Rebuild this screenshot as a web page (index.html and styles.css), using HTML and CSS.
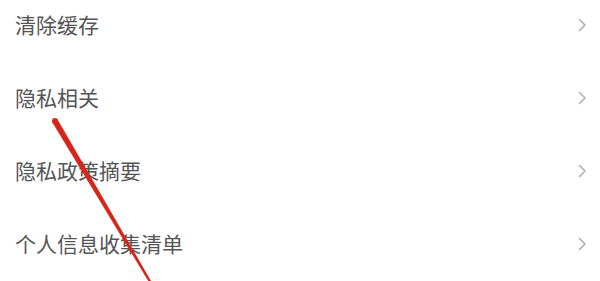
FILE: index.html
```html
<!DOCTYPE html>
<html lang="zh">
<head>
<meta charset="utf-8">
<link rel="stylesheet" href="styles.css">
</head>
<body>
<div class="page">
  <ul class="menu">
    <li class="row"><span class="label">清除缓存</span><svg class="chev" viewBox="0 0 9 14"><path d="M1.5 1.5 L7 7 L1.5 12.5" /></svg></li>
    <li class="row"><span class="label">隐私相关</span><svg class="chev" viewBox="0 0 9 14"><path d="M1.5 1.5 L7 7 L1.5 12.5" /></svg></li>
    <li class="row"><span class="label">隐私政策摘要</span><svg class="chev" viewBox="0 0 9 14"><path d="M1.5 1.5 L7 7 L1.5 12.5" /></svg></li>
    <li class="row"><span class="label">个人信息收集清单</span><svg class="chev" viewBox="0 0 9 14"><path d="M1.5 1.5 L7 7 L1.5 12.5" /></svg></li>
  </ul>
  <svg class="arrow" viewBox="0 0 600 281" width="600" height="281">
    <polygon points="57.6,119.5 154.5,287 152.5,288 52.4,122.5" fill="#d8271d"/>
    <circle cx="55" cy="121" r="3" fill="#d8271d"/>
    <polygon points="55.8,122 153.6,287.5 154,287.3 54.6,121" fill="#a01812" opacity="0.45"/>
  </svg>
</div>
</body>
</html>
```
FILE: styles.css
```css
html, body {
  margin: 0;
  padding: 0;
  background: #ffffff;
}
.page {
  position: relative;
  width: 600px;
  height: 281px;
  overflow: hidden;
  font-family: "Noto Sans CJK SC", "Noto Sans", sans-serif;
}
.menu {
  list-style: none;
  margin: -12px 0 0 0;
  padding: 0;
}
.row {
  height: 73px;
  display: flex;
  align-items: center;
  justify-content: space-between;
  padding: 0 13px 0 15px;
}
.label {
  font-size: 21px;
  line-height: 1;
  color: #555555;
}
.chev {
  width: 9px;
  height: 14px;
  fill: none;
  stroke: #b0b0b0;
  stroke-width: 1.6;
  stroke-linecap: round;
  stroke-linejoin: round;
}
.arrow {
  position: absolute;
  left: 0;
  top: 0;
  pointer-events: none;
}
```
